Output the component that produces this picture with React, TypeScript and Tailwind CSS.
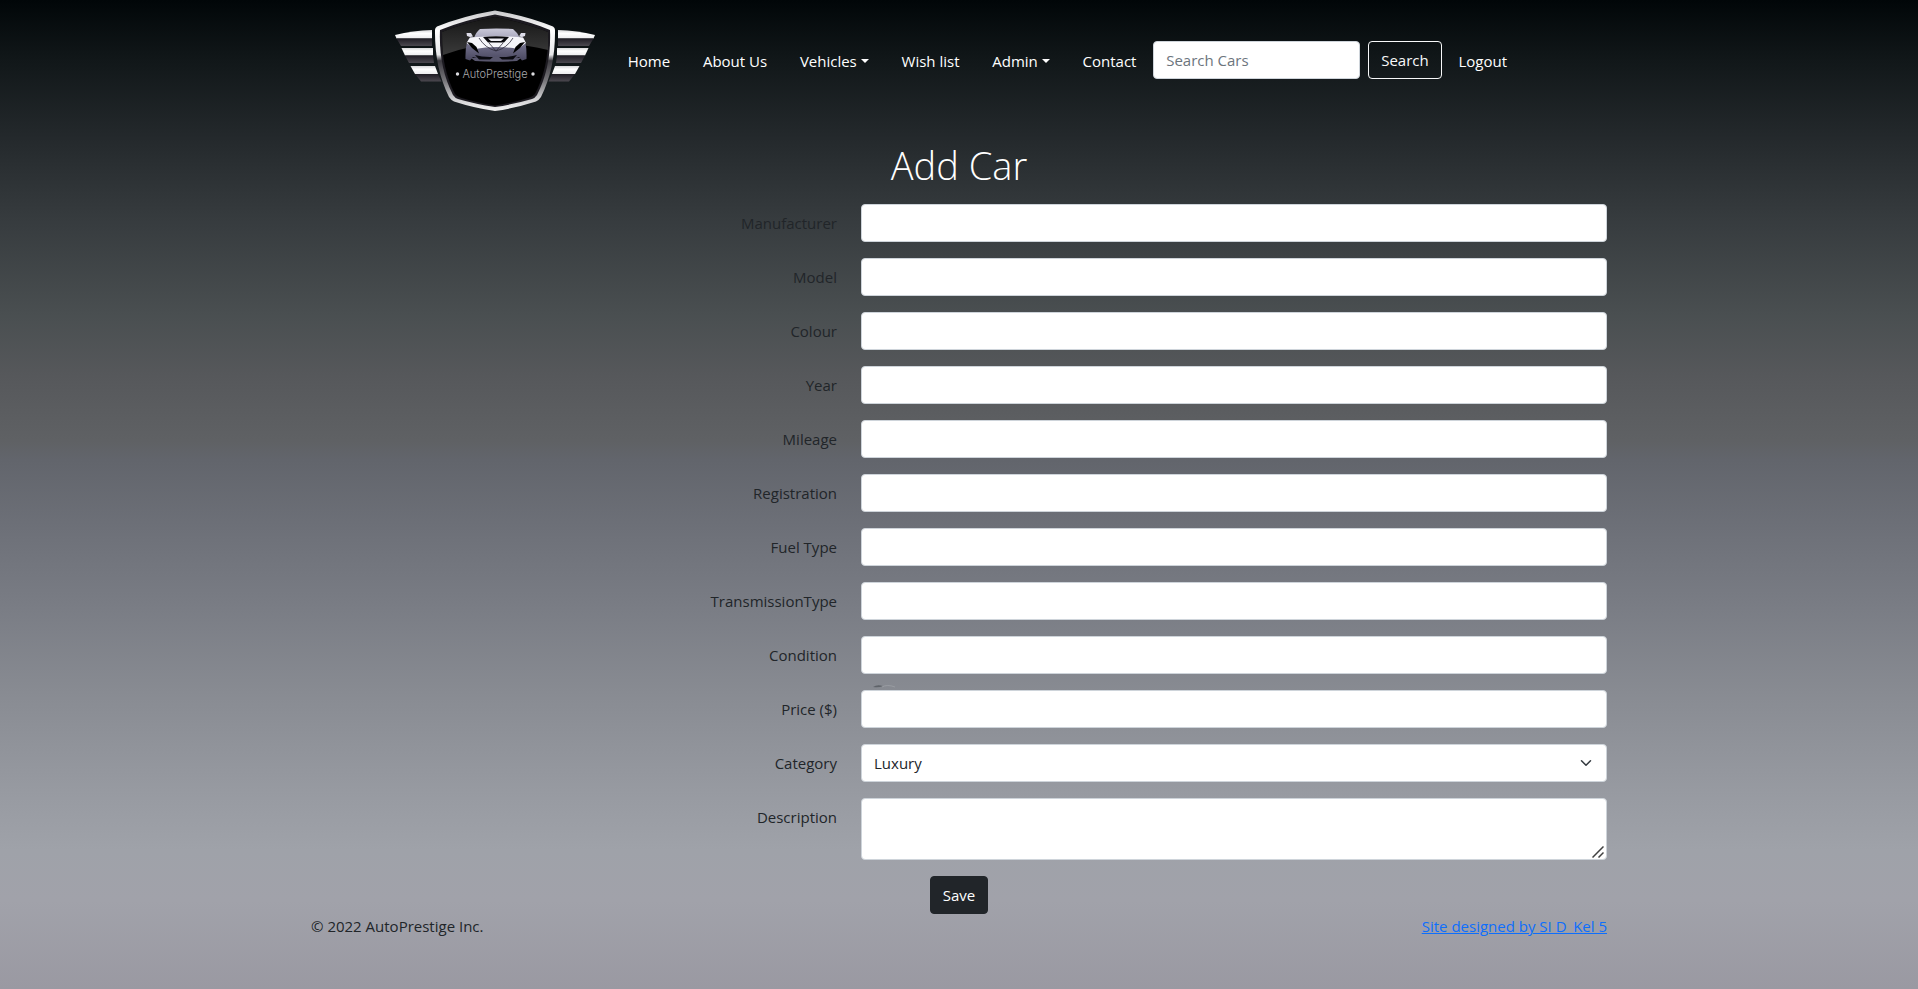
import type { ReactNode } from "react";

const textFields = [
  "Manufacturer",
  "Model",
  "Colour",
  "Year",
  "Mileage",
  "Registration",
  "Fuel Type",
  "TransmissionType",
  "Condition",
  "Price ($)",
];

const controlClass =
  "block w-full rounded border border-[#ced4da] bg-white px-3 text-[15px] leading-6 text-[#212529] outline-none focus:border-[#86b7fe]";

function Wing() {
  return (
    <g>
      <path d="M0 25 Q18 20.500 37 20 V28.500 H1.500 Z" fill="url(#silver)" />
      <path d="M1.500 28.500 H37 V36 H6 Z" fill="url(#steel)" />
      <path d="M6.500 38 H38 V45.500 H10 Z" fill="url(#silver)" />
      <path d="M10 45.500 H38 L39 53 H14 Z" fill="url(#steel)" />
      <path d="M15.500 56 H40 L43 64 H20 Z" fill="url(#silver)" />
      <path d="M20 64 H43 L46.500 71.500 H26 Z" fill="url(#steel)" />
    </g>
  );
}

function Logo() {
  return (
    <svg viewBox="0 0 200 101" className="h-[101px] w-[200px]" role="img" aria-label="AutoPrestige">
      <defs>
        <linearGradient id="silver" x1="0" y1="0" x2="0" y2="1">
          <stop offset="0" stopColor="#d8d8da" />
          <stop offset="0.4" stopColor="#ffffff" />
          <stop offset="1" stopColor="#ececee" />
        </linearGradient>
        <linearGradient id="steel" x1="0" y1="0" x2="0" y2="1">
          <stop offset="0" stopColor="#1f1c24" />
          <stop offset="1" stopColor="#4b484f" />
        </linearGradient>
        <linearGradient id="rim" x1="0" y1="0" x2="0" y2="1">
          <stop offset="0" stopColor="#c8c8ca" />
          <stop offset="0.2" stopColor="#ffffff" />
          <stop offset="0.44" stopColor="#e8e8ea" />
          <stop offset="0.5" stopColor="#3c3a40" />
          <stop offset="0.7" stopColor="#77767a" />
          <stop offset="0.88" stopColor="#d0d0d2" />
          <stop offset="1" stopColor="#f4f4f4" />
        </linearGradient>
        <linearGradient id="gloss" x1="0" y1="0" x2="0" y2="1">
          <stop offset="0" stopColor="#161616" />
          <stop offset="1" stopColor="#3a3a3a" />
        </linearGradient>
        <linearGradient id="roof" x1="0" y1="0" x2="0" y2="1">
          <stop offset="0" stopColor="#c9c8d8" />
          <stop offset="1" stopColor="#a9a8bd" />
        </linearGradient>
        <linearGradient id="bumper" x1="0" y1="0" x2="0" y2="1">
          <stop offset="0" stopColor="#8583a0" />
          <stop offset="1" stopColor="#4a4860" />
        </linearGradient>
      </defs>
      <Wing />
      <g transform="translate(200 0) scale(-1 1)">
        <Wing />
      </g>
      <path
        d="M100 0.500 Q132 6 158 16.500 Q160 17.500 160 20 Q160.500 58 146 87 Q144 90 141 91.500 Q121 98 100 101 Q79 98 59 91.500 Q56 90 54 87 Q39.500 58 40 20 Q40 17.500 42 16.500 Q68 6 100 0.500 Z"
        fill="url(#rim)"
      />
      <path
        d="M100 4.500 Q131 10 155 20 Q156.500 57 142 85 Q140 88 137 89 Q120 94 100 97 Q80 94 63 89 Q60 88 58 85 Q43.500 57 45 20 Q69 10 100 4.500 Z"
        fill="#1c1a20"
      />
      <path
        d="M100 7 Q130 12.500 153 22 Q154 57 140 84 Q138 86.500 135 87.500 Q119 92.500 100 95.500 Q81 92.500 65 87.500 Q62 86.500 60 84 Q46 57 47 22 Q70 12.500 100 7 Z"
        fill="#000000"
      />
      <path d="M100 7 Q130 12.500 153 22 V40 Q100 26 48 45 Q47 34 47 22 Q70 12.500 100 7 Z" fill="url(#gloss)" />
      <path d="M85 19 Q101 18 118 19 Q122 22 125 28 H79 Q81 22 85 19 Z" fill="url(#roof)" />
      <path d="M71.500 23 H76 L78 26.500 L75 27 L72 26 Z M130.500 23 H126 L124 26.500 L127 27 L130 26 Z" fill="#dddce8" />
      <path
        d="M75 27.500 Q101 24.500 128 27.500 Q132 32 131.500 49 L127 50.500 L124 47 Q101 54 78 47 L75 50.500 L70.500 49 Q70 32 75 27.500 Z"
        fill="url(#bumper)"
      />
      <path d="M76 48 Q101 45 126 48 L122 51 Q101 52.500 80 51 Z" fill="#57556c" />
      <path d="M75 27.500 Q101 24.500 128 27.500 L131 33 L123 39 Q101 35 80 39 L71.500 33 Z" fill="#f5f5f9" />
      <path d="M88 27 Q101 25.500 114 27 L109 32.500 H93 Z" fill="#08080c" />
      <path d="M93 28.500 H109 L106 31 H96 Z" fill="#eeeef4" />
      <path d="M72 32 L77 38 L84 43.500 L81.500 37 L77 33 Z M130 32 L125 38 L118 43.500 L120.500 37 L125 33 Z" fill="#000000" />
      <path d="M84 28 Q90 38 101 41 Q112 38 118 28 M94 33 L101 41 L108 33" fill="none" stroke="#2c2a38" strokeWidth="0.8" />
      <path d="M80 45 Q88 47.500 98 47 L95 49.500 H84 Z M122 45 Q114 47.500 104 47 L107 49.500 H118 Z" fill="#0a0a10" />
      <circle cx="62.500" cy="64" r="1.700" fill="#dcdce0" />
      <circle cx="138" cy="64" r="1.700" fill="#dcdce0" />
      <text
        x="100"
        y="68"
        textAnchor="middle"
        fontSize="11"
        fill="#a8a8ab"
        className="font-['Inter','Lato',sans-serif] font-light"
      >
        AutoPrestige
      </text>
    </svg>
  );
}

function NavLink({ children, caret = false }: { children: ReactNode; caret?: boolean }) {
  return (
    <a href="#" className="flex items-center gap-1 px-4 py-2 text-[15px] leading-6 font-medium whitespace-nowrap text-white">
      {children}
      {caret && <span className="border-x-4 border-t-4 border-x-transparent border-t-white" />}
    </a>
  );
}

function Row({ label, id, children }: { label: string; id: string; children: ReactNode }) {
  return (
    <div className="mb-4 grid grid-cols-12">
      <label htmlFor={id} className="col-span-5 self-start px-3 pt-[7px] text-right text-[15px] leading-6 text-[#212529]">
        {label}
      </label>
      <div className="col-span-7 px-3">{children}</div>
    </div>
  );
}

export default function App() {
  return (
    <div className="relative min-h-screen bg-[linear-gradient(to_bottom,#010608_0%,#111719_6%,#24292c_14%,#363b3e_22%,#4a4f51_32%,#56585b_38%,#5f6164_44.500%,#62656c_46.500%,#6e7179_54%,#797c84_61%,#888b92_70%,#979aa1_80%,#9fa2a9_86%,#a1a2aa_91%,#9a99a2_100%)] font-['Open_Sans','Noto_Sans',sans-serif]">
      <svg viewBox="0 0 24 6" className="absolute top-[683px] left-[45.5%] h-[6px] w-6" aria-hidden="true">
        <path d="M0 4 Q4 1 10 3 Q6 5 0 4 Z" fill="#4f5258" opacity="0.7" />
        <path d="M9 4 Q14 1 22 4" fill="none" stroke="#a4a6ac" strokeWidth="1" opacity="0.6" />
      </svg>
      <header>
        <nav className="mx-auto flex max-w-[1128px] items-center justify-between pt-[10px]">
          <a href="#" className="mr-4 block shrink-0">
            <Logo />
          </a>
          <NavLink>Home</NavLink>
          <NavLink>About Us</NavLink>
          <NavLink caret>Vehicles</NavLink>
          <NavLink>Wish list</NavLink>
          <NavLink caret>Admin</NavLink>
          <NavLink>Contact</NavLink>
          <form className="flex gap-2 pb-[2px]" onSubmit={(e) => e.preventDefault()}>
            <input
              type="search"
              aria-label="Search Cars"
              placeholder="Search Cars"
              className="h-[38px] w-[207px] rounded border border-[#ced4da] bg-white px-3 text-[15px] leading-6 text-[#212529] outline-none placeholder:text-[#6c757d]"
            />
            <button
              type="submit"
              className="h-[38px] rounded border border-[#f8f9fa] px-3 text-[15px] leading-6 font-medium text-[#f8f9fa]"
            >
              Search
            </button>
          </form>
          <NavLink>Logout</NavLink>
        </nav>
      </header>

      <main className="mx-auto max-w-[1320px] pt-[30px]">
        <h1 className="mb-[15px] text-center text-[38px] leading-[48px] font-light text-white">Add Car</h1>
        <form onSubmit={(e) => e.preventDefault()}>
          {textFields.map((label, i) => (
            <Row key={label} label={label} id={`field-${i}`}>
              <input id={`field-${i}`} type="text" className={`${controlClass} h-[38px]`} />
            </Row>
          ))}
          <Row label="Category" id="category">
            <div className="relative">
              <select id="category" defaultValue="Luxury" className={`${controlClass} h-[38px] appearance-none`}>
                <option>Luxury</option>
              </select>
              <svg
                viewBox="0 0 16 16"
                className="pointer-events-none absolute top-[13px] right-[13px] h-3 w-4"
                fill="none"
                stroke="#343a40"
                strokeWidth="2"
                strokeLinecap="round"
                strokeLinejoin="round"
                aria-hidden="true"
              >
                <path d="M2 5l6 6 6-6" />
              </svg>
            </div>
          </Row>
          <Row label="Description" id="description">
            <div className="relative">
              <textarea
                id="description"
                className={`${controlClass} h-[62px] resize-y py-[6px] [&::-webkit-resizer]:bg-transparent`}
              />
              <svg
                viewBox="0 0 12 12"
                className="pointer-events-none absolute right-[3px] bottom-[2px] h-3 w-3"
                fill="none"
                stroke="#404040"
                strokeWidth="1.500"
                aria-hidden="true"
              >
                <path d="M0.500 11.500 L11.500 0.500 M6.500 11.500 L11.500 6.500" />
              </svg>
            </div>
          </Row>
          <div className="flex justify-center">
            <button
              type="submit"
              className="h-[38px] rounded border border-[#212529] bg-[#212529] px-3 text-[15px] leading-6 font-medium text-white"
            >
              Save
            </button>
          </div>
        </form>
      </main>

      <footer className="mx-auto flex max-w-[1320px] justify-between px-3 text-[15px] leading-6">
        <p className="text-[#212529]">© 2022 AutoPrestige Inc.</p>
        <a href="#" className="text-[#0d6efd] underline">
          Site designed by SI D_Kel 5
        </a>
      </footer>
    </div>
  );
}
